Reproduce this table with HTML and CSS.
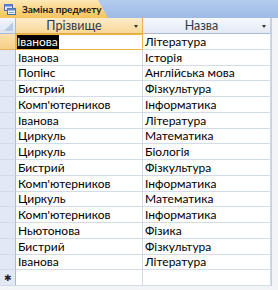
FILE: index.html
```html
<!DOCTYPE html>
<html>
<head>
<meta charset="utf-8">
<link rel="stylesheet" href="styles.css">
</head>
<body>
<div class="window">
  <div class="tabstrip">
    <div class="tab">
      <svg class="tab-icon" width="12" height="11" viewBox="0 0 12 11">
        <rect x="0.5" y="0.5" width="8" height="6" fill="#dfe9f7" stroke="#4a6fa5"/>
        <rect x="0.5" y="0.5" width="8" height="2" fill="#5b86c5"/>
        <rect x="3.5" y="4.5" width="8" height="6" fill="#eef3fb" stroke="#4a6fa5"/>
        <rect x="3.5" y="4.5" width="8" height="2" fill="#5b86c5"/>
        <line x1="5" y1="8.5" x2="10" y2="8.5" stroke="#7a9cc9"/>
      </svg>
      <span class="tab-title">Заміна предмету</span>
    </div>
  </div>
  <div class="sheet">
    <div class="grid">
      <div class="corner"><span class="corner-tri"></span></div>
      <div class="colhead active">Прізвище<span class="arrow"></span></div>
      <div class="colhead">Назва<span class="arrow"></span></div>

      <div class="sel current"></div><div class="cell focus"><span class="hl">Іванова</span></div><div class="cell">Література</div>
      <div class="sel"></div><div class="cell">Іванова</div><div class="cell">Історія</div>
      <div class="sel"></div><div class="cell">Попінс</div><div class="cell">Англійська мова</div>
      <div class="sel"></div><div class="cell">Бистрий</div><div class="cell">Фізкультура</div>
      <div class="sel"></div><div class="cell">Комп'ютерников</div><div class="cell">Інформатика</div>
      <div class="sel"></div><div class="cell">Іванова</div><div class="cell">Література</div>
      <div class="sel"></div><div class="cell">Циркуль</div><div class="cell">Математика</div>
      <div class="sel"></div><div class="cell">Циркуль</div><div class="cell">Біологія</div>
      <div class="sel"></div><div class="cell">Бистрий</div><div class="cell">Фізкультура</div>
      <div class="sel"></div><div class="cell">Комп'ютерников</div><div class="cell">Інформатика</div>
      <div class="sel"></div><div class="cell">Циркуль</div><div class="cell">Математика</div>
      <div class="sel"></div><div class="cell">Комп'ютерников</div><div class="cell">Інформатика</div>
      <div class="sel"></div><div class="cell">Ньютонова</div><div class="cell">Фізика</div>
      <div class="sel"></div><div class="cell">Бистрий</div><div class="cell">Фізкультура</div>
      <div class="sel"></div><div class="cell">Іванова</div><div class="cell">Література</div>
      <div class="sel newrow">✱</div><div class="cell"></div><div class="cell"></div>
    </div>
  </div>
</div>
</body>
</html>
```
FILE: styles.css
```css
html, body {
  margin: 0;
  padding: 0;
  background: #f2f4f7;
}
.window {
  width: 278px;
  height: 290px;
  overflow: hidden;
  font-family: Lato, "Open Sans", sans-serif;
  font-size: 12px;
  color: #000;
}
.tabstrip {
  height: 18px;
  background: linear-gradient(#b3cbed, #9fbbe5);
  display: flex;
  align-items: flex-end;
}
.tab {
  height: 18px;
  width: 108px;
  box-sizing: border-box;
  display: flex;
  align-items: center;
  gap: 6px;
  padding-left: 4px;
  background: linear-gradient(#fde9b8, #f9d27a 60%, #f7c45b);
  clip-path: polygon(0 0, 98px 0, 108px 18px, 0 18px);
}
.tab-icon {
  flex: none;
}
.tab-title {
  font-weight: bold;
  font-size: 10px;
  color: #1c1c1c;
  white-space: nowrap;
}
.sheet {
  height: 272px;
  background: #f2f4f7;
}
.grid {
  display: grid;
  grid-template-columns: 16px 127px 128px;
  grid-template-rows: 16px repeat(16, 15.75px);
  width: 271px;
  background: #fff;
  border-right: 1px solid #c5cfdd;
}
.corner {
  background: linear-gradient(#f3f6fb, #dbe4f2);
  border-right: 1px solid #a9bcd6;
  border-bottom: 1px solid #a9bcd6;
  position: relative;
}
.corner-tri {
  position: absolute;
  right: 2px;
  bottom: 2px;
  width: 0;
  height: 0;
  border-left: 9px solid transparent;
  border-bottom: 9px solid #b7cae6;
}
.colhead {
  position: relative;
  display: flex;
  align-items: center;
  justify-content: center;
  padding-right: 10px;
  background: linear-gradient(#f6f8fc, #e3e9f4);
  border-right: 1px solid #c5d1e3;
  border-bottom: 1px solid #a9bcd6;
  color: #2d3a4d;
  font-size: 12.5px;
}
.colhead.active {
  background: linear-gradient(#fdebc8, #f9d899);
  border-right-color: #e6b35a;
  border-bottom-color: #e0a94a;
}
.arrow {
  position: absolute;
  right: 4px;
  top: 7px;
  width: 0;
  height: 0;
  border-left: 2.5px solid transparent;
  border-right: 2.5px solid transparent;
  border-top: 3px solid #333;
}
.sel {
  background: #e3e9f4;
  border-right: 1px solid #a9bcd6;
  border-bottom: 1px solid #d3dbe8;
  display: flex;
  align-items: center;
  justify-content: center;
}
.sel.current {
  background: linear-gradient(#fbe0ad, #f8cf84);
  border-bottom-color: #e3b15c;
}
.sel.newrow {
  font-size: 9px;
  color: #222;
}
.cell {
  border-right: 1px solid #d3dbe8;
  border-bottom: 1px solid #d3dbe8;
  padding-left: 2px;
  display: flex;
  align-items: center;
  white-space: nowrap;
  overflow: hidden;
  box-sizing: border-box;
}
.cell.focus {
  border: 1px solid #efb54a;
  padding-left: 0;
}
.hl {
  background: #000;
  color: #fff;
  padding: 1px 1px 1px 0;
}
```
